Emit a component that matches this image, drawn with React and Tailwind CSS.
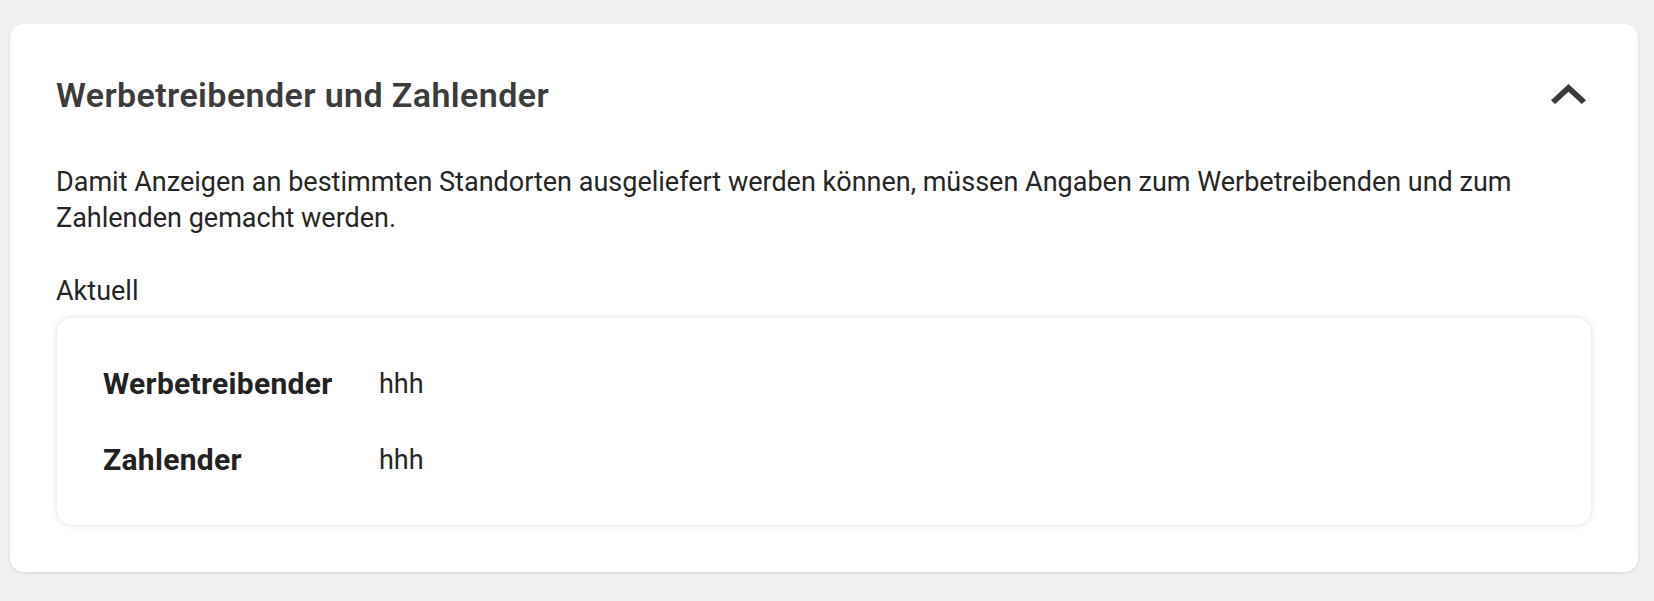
import React from "react";

const rows = [
  { label: "Werbetreibender", value: "hhh" },
  { label: "Zahlender", value: "hhh" },
];

function ExpandLess() {
  return (
    <svg width="35" height="20" viewBox="6 8 12 7.41" preserveAspectRatio="none" aria-hidden="true">
      <path d="M12 8l-6 6 1.41 1.41L12 10.83l4.59 4.58L18 14z" fill="#3a3a3a" />
    </svg>
  );
}

export default function App() {
  return (
    <div
      className="min-h-[601px] bg-[#f1f1f1] pt-[24px] pl-[10px] pr-[16px] pb-[30px]"
      style={{ fontFamily: "Roboto, 'Noto Sans', sans-serif" }}
    >
      <section className="rounded-[14px] bg-white px-[46px] pt-[49px] pb-[46px] shadow-[0_1px_3px_rgba(0,0,0,0.12)]">
        <header className="flex items-center justify-between">
          <h2 className="text-[34px] leading-[44px] font-semibold tracking-[0.4px] text-[#3c3c3c]">
            Werbetreibender und Zahlender
          </h2>
          <button type="button" className="mr-[6px] mt-[-3px] flex items-center">
            <ExpandLess />
          </button>
        </header>

        <p className="mt-[47px] text-[27px] leading-[36px] text-[#262626]">
          Damit Anzeigen an bestimmten Standorten ausgeliefert werden können, müssen Angaben zum Werbetreibenden und zum Zahlenden gemacht werden.
        </p>

        <div className="mt-[37px] text-[27px] leading-[36px] text-[#262626]">Aktuell</div>

        <div className="mt-[8px] rounded-[16px] bg-white px-[46px] pt-[48px] pb-[47px] shadow-[0_0_6px_rgba(0,0,0,0.09)] border border-[#f0f0f0]">
          <div className="flex flex-col gap-[40px]">
            {rows.map((r) => (
              <div key={r.label} className="flex items-center">
                <div className="w-[276px] text-[30px] leading-[36px] font-bold tracking-[0.3px] text-[#222222]">
                  {r.label}
                </div>
                <div className="text-[27px] leading-[36px] text-[#262626]">{r.value}</div>
              </div>
            ))}
          </div>
        </div>
      </section>
    </div>
  );
}
